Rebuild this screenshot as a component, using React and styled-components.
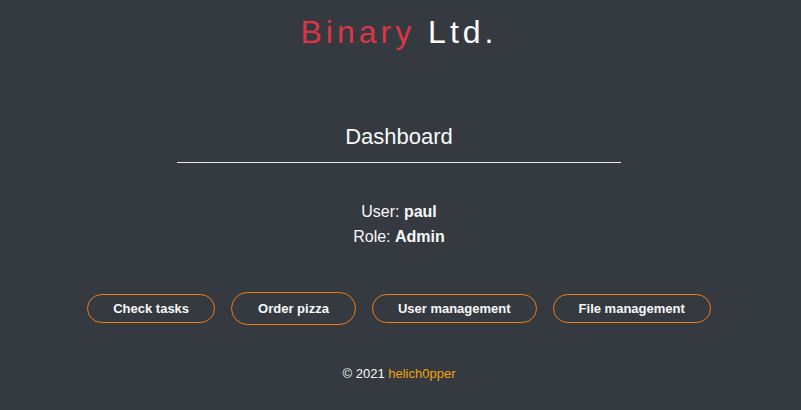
import React from "react";
import styled, { createGlobalStyle } from "styled-components";

const Global = createGlobalStyle`
  html, body { margin: 0; padding: 0; background: #343a40; }
  body { font-family: "Liberation Sans", Arial, sans-serif; color: #f8f9fa; }
`;

const Page = styled.div`
  width: 801px;
  height: 410px;
  background: #343a40;
  display: flex;
  flex-direction: column;
  align-items: center;
  box-sizing: border-box;
  padding-top: 12px;
  padding-right: 3px;
`;

const Brand = styled.h1`
  margin: 0;
  font-size: 32px;
  font-weight: 400;
  letter-spacing: 4px;
  line-height: 40px;
  color: #ffffff;
`;

const Red = styled.span`
  color: #dc3545;
`;

const Heading = styled.h2`
  margin: 70px 0 0;
  width: 444px;
  text-align: center;
  font-size: 22px;
  font-weight: 400;
  line-height: 30px;
  padding-bottom: 10px;
  border-bottom: 1px solid #e9ecef;
`;

const Info = styled.div`
  margin-top: 36px;
  font-size: 16px;
  line-height: 25px;
  text-align: center;
`;

const Buttons = styled.div`
  margin-top: 43px;
  display: flex;
  align-items: center;
  gap: 16px;
`;

const Btn = styled.button`
  font-family: "Liberation Sans", Arial, sans-serif;
  font-size: 13px;
  font-weight: 700;
  color: #f8f9fa;
  background: transparent;
  border: 1px solid #f07d14;
  border-radius: 999px;
  height: ${(p) => (p.$tall ? "33px" : "29px")};
  padding: 0 ${(p) => (p.$tall ? "26px" : "25px")};
  cursor: pointer;
`;

const Footer = styled.footer`
  margin-top: 41px;
  font-size: 13px;
  line-height: 16px;
`;

const Accent = styled.span`
  color: #f5a30a;
`;

export default function App() {
  return (
    <>
      <Global />
      <Page>
        <Brand>
          <Red>Binary</Red> Ltd.
        </Brand>
        <Heading>Dashboard</Heading>
        <Info>
          <div>
            User: <b>paul</b>
          </div>
          <div>
            Role: <b>Admin</b>
          </div>
        </Info>
        <Buttons>
          <Btn>Check tasks</Btn>
          <Btn $tall>Order pizza</Btn>
          <Btn>User management</Btn>
          <Btn>File management</Btn>
        </Buttons>
        <Footer>
          © 2021 <Accent>helich0pper</Accent>
        </Footer>
      </Page>
    </>
  );
}
